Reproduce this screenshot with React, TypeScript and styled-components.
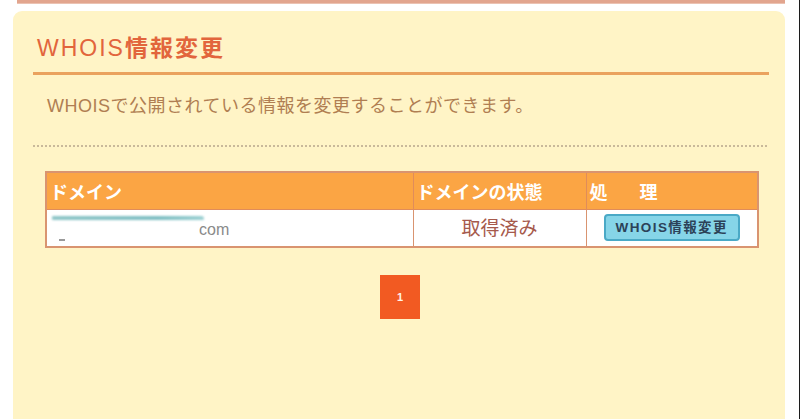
import React from "react";
import styled, { createGlobalStyle } from "styled-components";

const Global = createGlobalStyle`
  html, body { margin: 0; padding: 0; background: #ffffff; }
  body { font-family: "Liberation Sans", "Noto Sans CJK JP", sans-serif; }
`;

const Page = styled.div`
  box-sizing: border-box;
  width: 800px;
  height: 419px;
  overflow: hidden;
  background: #ffffff;
  border-right: 1px solid #1c1c1c;
  padding: 0 14px 0 13px;
  display: flex;
  flex-direction: column;
`;

const TopBar = styled.div`
  height: 3px;
  margin: 0 0 0 4px;
  background: #e2a58e;
  border-bottom: 1px solid #ebc2b2;
`;

const Panel = styled.section`
  flex: 1;
  margin-top: 7px;
  background: #fff4c6;
  border-radius: 9px 9px 0 0;
  padding: 0 16px 0 20px;
  display: flex;
  flex-direction: column;
`;

const Header = styled.div`
  padding: 25px 0 12px 4px;
  border-bottom: 3px solid #eaa25e;
`;

const Title = styled.h1`
  margin: 0;
  font-family: "Liberation Sans", "Noto Sans CJK JP", sans-serif;
  font-size: 23px;
  line-height: 24px;
  font-weight: 400;
  letter-spacing: 2px;
  color: #e2653c;
  & > b { font-weight: 700; }
`;

const Description = styled.p`
  margin: 0 2px 0 0;
  padding: 19px 0 27px 14px;
  font-size: 18px;
  line-height: 24px;
  letter-spacing: 0.5px;
  color: #b07e52;
  border-bottom: 2px dotted #c9b99a;
`;

const Table = styled.table`
  margin: 24px 12px 0 12px;
  border-collapse: collapse;
  border: 2px solid #d99470;
  table-layout: fixed;
  width: 712px;
`;

const Column = styled.col<{ $w: number }>`
  width: ${(p) => p.$w}px;
`;

const HeadCell = styled.th`
  box-sizing: border-box;
  height: 37px;
  background: #fba544;
  color: #ffffff;
  font-family: "Noto Sans CJK JP", sans-serif;
  font-size: 18px;
  font-weight: 700;
  text-align: left;
  padding: 0 0 0 3px;
  border: 1px solid #e08c5a;
  line-height: 20px;
`;

const SpacedLabel = styled.span`
  letter-spacing: 32px;
`;

const Cell = styled.td<{ $align?: string }>`
  height: 36px;
  background: #ffffff;
  border: 1px solid #d99470;
  padding: 0 0 0 4px;
  text-align: ${(p) => p.$align || "left"};
  vertical-align: middle;
`;

const DomainBox = styled.div`
  position: relative;
  height: 36px;
`;

const Redaction = styled.div`
  position: absolute;
  left: 1px;
  top: 6px;
  width: 152px;
  height: 4px;
  border-radius: 3px 6px 3px 3px;
  background: linear-gradient(90deg, #8fc6c8 0%, #7fbfc3 70%, #9bd0d2 100%);
  filter: blur(0.8px);
`;

const DomainTail = styled.span`
  position: absolute;
  left: 148px;
  top: 10px;
  font-size: 16px;
  line-height: 20px;
  color: #8a8a8a;
`;

const Tick = styled.span`
  position: absolute;
  left: 8px;
  top: 29px;
  width: 6px;
  height: 2px;
  background: #9a9a9a;
`;

const Status = styled.span`
  font-family: "Noto Sans CJK JP", sans-serif;
  font-size: 19px;
  line-height: 20px;
  color: #a65a4c;
  padding-right: 4px;
`;

const ActionButton = styled.button`
  box-sizing: border-box;
  width: 136px;
  height: 27px;
  margin: 0 4px 0 0;
  padding: 0;
  background: #86d5e8;
  border: 2px solid #4aa9c6;
  border-radius: 4px;
  color: #2c4258;
  font-family: "Liberation Sans", "Noto Sans CJK JP", sans-serif;
  font-size: 13.5px;
  font-weight: 700;
  letter-spacing: 1.4px;
  line-height: 20px;
  cursor: pointer;
`;

const Pager = styled.nav`
  display: flex;
  justify-content: center;
  margin-top: 27px;
  padding-right: 2px;
`;

const PageItem = styled.span`
  width: 40px;
  height: 44px;
  background: #f25a22;
  color: #fff4ea;
  font-size: 11px;
  font-weight: 700;
  display: flex;
  align-items: center;
  justify-content: center;
`;

export default function App() {
  return (
    <>
      <Global />
      <Page>
        <TopBar />
        <Panel>
          <Header>
            <Title>
              WHOIS<b>情報変更</b>
            </Title>
          </Header>
          <Description>WHOISで公開されている情報を変更することができます。</Description>
          <Table>
            <colgroup>
              <Column $w={367} />
              <Column $w={173} />
              <Column $w={172} />
            </colgroup>
            <thead>
              <tr>
                <HeadCell>ドメイン</HeadCell>
                <HeadCell>ドメインの状態</HeadCell>
                <HeadCell>
                  <SpacedLabel>処理</SpacedLabel>
                </HeadCell>
              </tr>
            </thead>
            <tbody>
              <tr>
                <Cell>
                  <DomainBox>
                    <Redaction />
                    <DomainTail>com</DomainTail>
                    <Tick />
                  </DomainBox>
                </Cell>
                <Cell $align="center">
                  <Status>取得済み</Status>
                </Cell>
                <Cell $align="center">
                  <ActionButton type="button">WHOIS情報変更</ActionButton>
                </Cell>
              </tr>
            </tbody>
          </Table>
          <Pager>
            <PageItem>1</PageItem>
          </Pager>
        </Panel>
      </Page>
    </>
  );
}
